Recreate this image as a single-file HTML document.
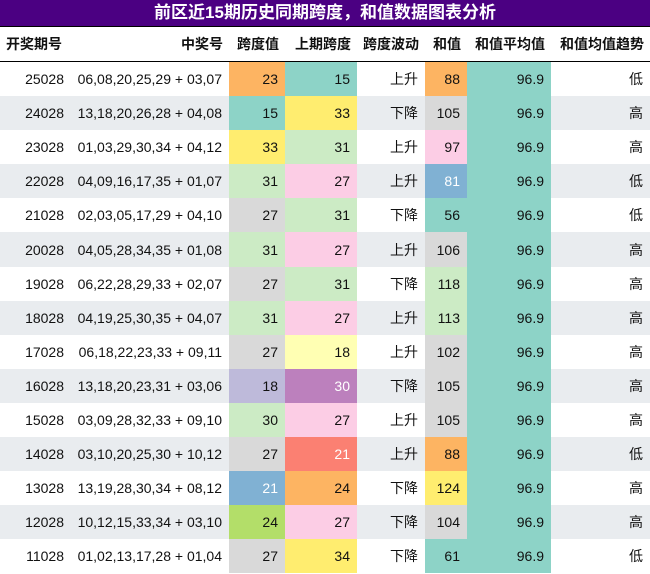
<!DOCTYPE html>
<html><head><meta charset="utf-8"><style>
body{margin:0;width:650px;height:574px;overflow:hidden;background:#fff;font-family:"Liberation Sans","Noto Sans CJK SC",sans-serif;}
.t{height:26px;background:#4b0082;color:#fff;text-align:center;font-size:17px;font-weight:bold;line-height:26px;border-bottom:1px solid #000;}
table{border-collapse:collapse;table-layout:fixed;width:650px;font-size:14px;color:#111;}
th{height:34px;font-weight:bold;text-align:right;padding:0 6px;border-bottom:1px solid #000;white-space:nowrap;}
th:first-child{text-align:left;}
td{height:34.1px;padding:0 7px 0 0;text-align:right;white-space:nowrap;}
td:first-child{padding-right:2px;}
tr:nth-child(even) td{background:#e9ecef;}
td.a{background:#8dd3c7!important}
.o{background:#fdb462!important}.q{background:#8dd3c7!important}.y{background:#ffed6f!important}
.g{background:#d9d9d9!important}.p{background:#fccde5!important}.l{background:#ccebc5!important}
.b{background:#80b1d3!important;color:#fff}.ly{background:#ffffb3!important}.v{background:#bebada!important}
.u{background:#bc80bd!important;color:#fff}.s{background:#fb8072!important;color:#fff}.gr{background:#b3de69!important}
</style></head><body>
<div class="t">前区近15期历史同期跨度，和值数据图表分析</div>
<table>
<colgroup><col style="width:66px"><col style="width:163px"><col style="width:56px"><col style="width:72px"><col style="width:68px"><col style="width:42px"><col style="width:84px"><col style="width:99px"></colgroup>
<thead><tr><th>开奖期号</th><th>中奖号</th><th>跨度值</th><th>上期跨度</th><th>跨度波动</th><th>和值</th><th>和值平均值</th><th>和值均值趋势</th></tr></thead>
<tbody>
<tr><td>25028</td><td>06,08,20,25,29 + 03,07</td><td class="o">23</td><td class="q">15</td><td>上升</td><td class="o">88</td><td class="a">96.9</td><td>低</td></tr>
<tr><td>24028</td><td>13,18,20,26,28 + 04,08</td><td class="q">15</td><td class="y">33</td><td>下降</td><td class="g">105</td><td class="a">96.9</td><td>高</td></tr>
<tr><td>23028</td><td>01,03,29,30,34 + 04,12</td><td class="y">33</td><td class="l">31</td><td>上升</td><td class="p">97</td><td class="a">96.9</td><td>高</td></tr>
<tr><td>22028</td><td>04,09,16,17,35 + 01,07</td><td class="l">31</td><td class="p">27</td><td>上升</td><td class="b">81</td><td class="a">96.9</td><td>低</td></tr>
<tr><td>21028</td><td>02,03,05,17,29 + 04,10</td><td class="g">27</td><td class="l">31</td><td>下降</td><td class="q">56</td><td class="a">96.9</td><td>低</td></tr>
<tr><td>20028</td><td>04,05,28,34,35 + 01,08</td><td class="l">31</td><td class="p">27</td><td>上升</td><td class="g">106</td><td class="a">96.9</td><td>高</td></tr>
<tr><td>19028</td><td>06,22,28,29,33 + 02,07</td><td class="g">27</td><td class="l">31</td><td>下降</td><td class="l">118</td><td class="a">96.9</td><td>高</td></tr>
<tr><td>18028</td><td>04,19,25,30,35 + 04,07</td><td class="l">31</td><td class="p">27</td><td>上升</td><td class="l">113</td><td class="a">96.9</td><td>高</td></tr>
<tr><td>17028</td><td>06,18,22,23,33 + 09,11</td><td class="g">27</td><td class="ly">18</td><td>上升</td><td class="g">102</td><td class="a">96.9</td><td>高</td></tr>
<tr><td>16028</td><td>13,18,20,23,31 + 03,06</td><td class="v">18</td><td class="u">30</td><td>下降</td><td class="g">105</td><td class="a">96.9</td><td>高</td></tr>
<tr><td>15028</td><td>03,09,28,32,33 + 09,10</td><td class="l">30</td><td class="p">27</td><td>上升</td><td class="g">105</td><td class="a">96.9</td><td>高</td></tr>
<tr><td>14028</td><td>03,10,20,25,30 + 10,12</td><td class="g">27</td><td class="s">21</td><td>上升</td><td class="o">88</td><td class="a">96.9</td><td>低</td></tr>
<tr><td>13028</td><td>13,19,28,30,34 + 08,12</td><td class="b">21</td><td class="o">24</td><td>下降</td><td class="y">124</td><td class="a">96.9</td><td>高</td></tr>
<tr><td>12028</td><td>10,12,15,33,34 + 03,10</td><td class="gr">24</td><td class="p">27</td><td>下降</td><td class="g">104</td><td class="a">96.9</td><td>高</td></tr>
<tr><td>11028</td><td>01,02,13,17,28 + 01,04</td><td class="g">27</td><td class="y">34</td><td>下降</td><td class="q">61</td><td class="a">96.9</td><td>低</td></tr>
</tbody></table>
</body></html>
